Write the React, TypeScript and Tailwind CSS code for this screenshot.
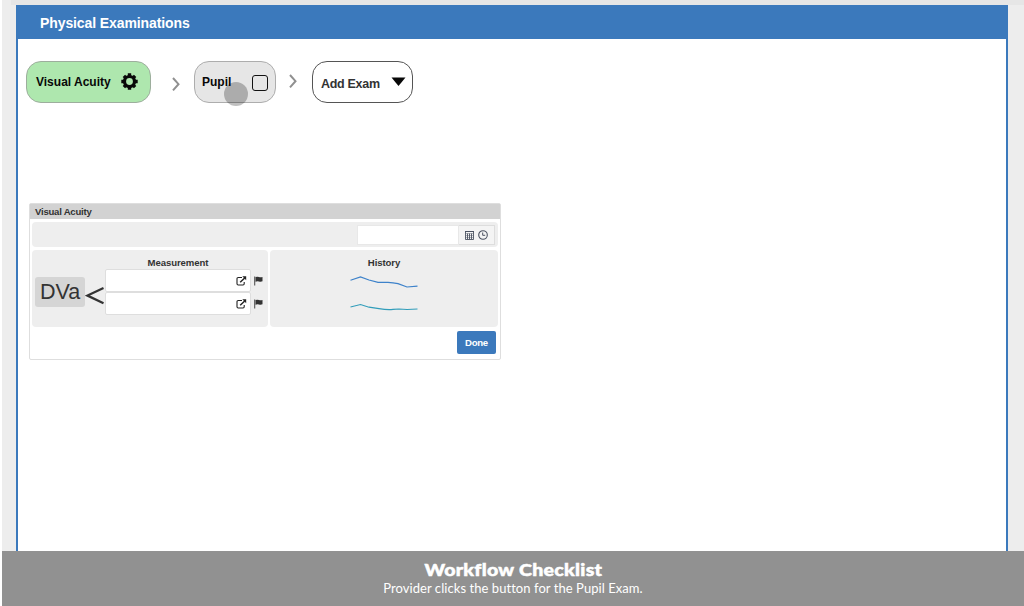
import type { ReactNode } from 'react';

const Gear = () => (
  <svg className="ml-[10px] h-[17px] w-[17px] shrink-0" viewBox="0 0 17 17" fill="none" stroke="#080808">
    <circle cx="8.500" cy="8.500" r="5" strokeWidth="3.200" />
    <path strokeWidth="3.400" d="M8.500 0.300V3M8.500 14V16.700M0.300 8.500H3M14 8.500H16.700M2.900 2.900L4.700 4.700M12.300 12.300L14.100 14.100M14.100 2.900L12.300 4.700M4.700 12.300L2.900 14.100" />
  </svg>
);

const Chevron = ({ className }: { className: string }) => (
  <svg className={`h-4 w-[10px] shrink-0 ${className}`} viewBox="0 0 10 16" fill="none" stroke="#909090" strokeWidth="2">
    <path d="M2 2L7.500 8.200L2 14.400" />
  </svg>
);

const PopOut = () => (
  <svg className="h-[10px] w-[11px]" viewBox="0 0 11 10" fill="none" stroke="#222" strokeWidth="1.100">
    <path d="M6 1.500H2.200Q1 1.500 1 2.700V7.800Q1 9 2.200 9H7Q8.200 9 8.200 7.800V6" />
    <path d="M4.200 6.200L8.700 2" strokeWidth="1.500" />
    <path d="M6.300 0.300H10.200V4.200Z" fill="#222" stroke="none" />
  </svg>
);

const Flag = () => (
  <svg className="h-[10px] w-[9px]" viewBox="0 0 9 10" fill="#333">
    <path d="M0.300 0.500H1.200V9.500H0.300Z" />
    <path d="M1.500 1.100Q3.300 0.400 5 1T8.500 0.900V5.300Q6.800 6.100 5 5.500T1.500 5.700Z" />
  </svg>
);

const Calendar = () => (
  <svg className="h-[10px] w-[9px]" viewBox="0 0 9 10" fill="none" stroke="#4b5261">
    <path d="M0.500 2V9.500H8.500V2M2.500 3.500V9M4.500 3.500V9M6.500 3.500V9" strokeWidth="0.900" />
    <path d="M0 1.500H9" strokeWidth="1" />
    <path d="M1 3.500H8M1 5.500H8M1 7.500H8" strokeWidth="0.400" />
  </svg>
);

const Clock = () => (
  <svg className="h-[10px] w-[10px]" viewBox="0 0 10 10" fill="none" stroke="#4b5261" strokeWidth="1.100">
    <circle cx="5" cy="5" r="4.300" />
    <path d="M4.700 2.500V5.300H7.200" strokeWidth="1" />
  </svg>
);

const Field = () => (
  <div className="flex h-[23px] items-center">
    <div className="flex h-[23px] w-[146px] items-center justify-end rounded-[2px] border border-[#dedede] bg-white pt-[2px] pr-[3px]">
      <PopOut />
    </div>
    <div className="ml-[3px] pt-[2px]"><Flag /></div>
  </div>
);

const Chip = ({ className, children }: { className: string; children: ReactNode }) => (
  <button className={`relative flex shrink-0 items-center rounded-[15px] border text-left font-bold ${className}`}>{children}</button>
);

export default function App() {
  return (
    <div className="flex h-[606px] w-[1024px] flex-col overflow-hidden bg-white pl-[2px] font-['Liberation_Sans',Arial,sans-serif] text-[#333]">
      <div className="flex h-[551px] flex-col bg-[#ededed]">
        <div className="ml-[9px] h-[5px] shrink-0 bg-[#e6e6e6]" />
        <main className="ml-[14px] flex w-[992px] grow flex-col border-x-2 border-[#3b79bc] bg-white">
          <header className="flex h-[34px] shrink-0 items-center bg-[#3b79bc] pt-[2px] pl-[22px] text-[14px] font-bold text-white">
            <span className="tracking-[-0.100px]">Physical Examinations</span>
          </header>

          <nav className="flex h-[64px] items-start pt-[22px] pl-[8px]">
            <Chip className="h-[41.500px] w-[125px] border-[#9dae9d] bg-[#aee7ae] pl-[9px] text-[12px] text-[#080808]">
              <span className="w-[75px] whitespace-nowrap">Visual Acuity</span>
              <Gear />
            </Chip>
            <Chevron className="mt-[15px] ml-[20px]" />
            <Chip className="ml-[13px] h-[41.500px] w-[82px] border-[#adadad] bg-[#e6e6e6] pl-[7px] text-[12px] text-[#080808]">
              <span className="w-[50px]">Pupil</span>
              <span className="mt-[2px] h-4 w-4 rounded-[3px] border-[1.500px] border-[#111]" />
              <span className="absolute top-[20px] left-[29px] h-6 w-6 rounded-full bg-black/25" />
            </Chip>
            <Chevron className="mt-[12px] ml-[12px]" />
            <Chip className="ml-[14px] h-[41.500px] w-[101px] border-[#555] bg-white pl-[8px] text-[12.500px] tracking-[-0.300px]">
              <span className="w-[69.500px] pt-[5px] whitespace-nowrap">Add Exam</span>
              <svg className="h-[9px] w-[15px]" viewBox="0 0 15 9"><path d="M0.500 0.600H14.500L7.500 9Z" fill="#080808" /></svg>
            </Chip>
          </nav>

          <section className="mt-[99.500px] ml-[11px] flex h-[157.500px] w-[472px] flex-col rounded-[2px] border border-[#dedede] bg-white text-[9.600px]">
            <h2 className="flex h-[15.500px] shrink-0 items-center bg-[#d2d2d2] pt-px pl-[5px] font-bold tracking-[-0.250px]">Visual Acuity</h2>
            <div className="mt-[3px] ml-[2px] flex h-[25px] w-[466px] shrink-0 items-center justify-end rounded-[4px] bg-[#eee] pr-[3px]">
              <div className="h-[20px] w-[102px] border border-[#e8e8e8] bg-white" />
              <div className="flex h-[20px] w-[36px] items-center justify-center gap-[4px] border border-l-0 border-[#ddd] bg-[#f4f4f4]">
                <Calendar />
                <Clock />
              </div>
            </div>
            <div className="mt-[3px] ml-[2px] flex h-[77px] shrink-0 gap-[2px]">
              <div className="flex w-[236px] rounded-[4px] bg-[#eee]">
                <div className="mt-[27px] ml-[3px] flex h-[30px] w-[50px] items-center justify-center rounded-[3px] bg-[#d5d5d5] text-[21.500px]">DVa</div>
                <svg className="mt-[35px] h-[20px] w-[20px]" viewBox="0 0 20 20" fill="none" stroke="#333" strokeWidth="2.200">
                  <path d="M18.500 3L2.500 10.600L18.500 18.200" />
                </svg>
                <div className="flex flex-col">
                  <h3 className="flex h-[18.500px] w-[146px] items-center justify-center pt-[7px] font-bold tracking-[-0.080px]">Measurement</h3>
                  <Field />
                  <Field />
                </div>
              </div>
              <div className="flex w-[228px] flex-col items-center rounded-[4px] bg-[#eee]">
                <h3 className="flex h-[18.500px] items-center pt-[7px] font-bold tracking-[-0.100px]">History</h3>
                <svg className="h-[45px] w-[68px]" viewBox="0 0 68 45" fill="none" strokeWidth="1.200">
                  <path d="M0.500 11.200L10.500 8L19 11L28 13.400H38Q43 13.700 48 14.700L57 18L67.500 17.200" stroke="#3d82ca" />
                  <path d="M0.500 38L10.500 35.500L19 38.200L29 39.600Q37 41 43 40.400L49 40L57 40.500L67.500 40" stroke="#319dba" />
                </svg>
              </div>
            </div>
            <button className="mt-[4px] mr-[4px] flex h-[23px] w-[39px] items-center justify-center self-end rounded-[2px] bg-[#3b79bc] pt-px font-bold tracking-[-0.300px] text-white">Done</button>
          </section>
        </main>
      </div>
      <footer className="flex h-[55px] flex-col items-center bg-[#919191] pt-[9px] text-white">
        <strong className="scale-x-[1.150] text-[17px] leading-[20px] font-black tracking-[0.250px] font-['Lato',sans-serif] [-webkit-text-stroke:0.500px_white]">Workflow Checklist</strong>
        <span className="text-[13px] leading-[17px] tracking-[0.060px] font-['Lato',sans-serif]">Provider clicks the button for the Pupil Exam.</span>
      </footer>
    </div>
  );
}
